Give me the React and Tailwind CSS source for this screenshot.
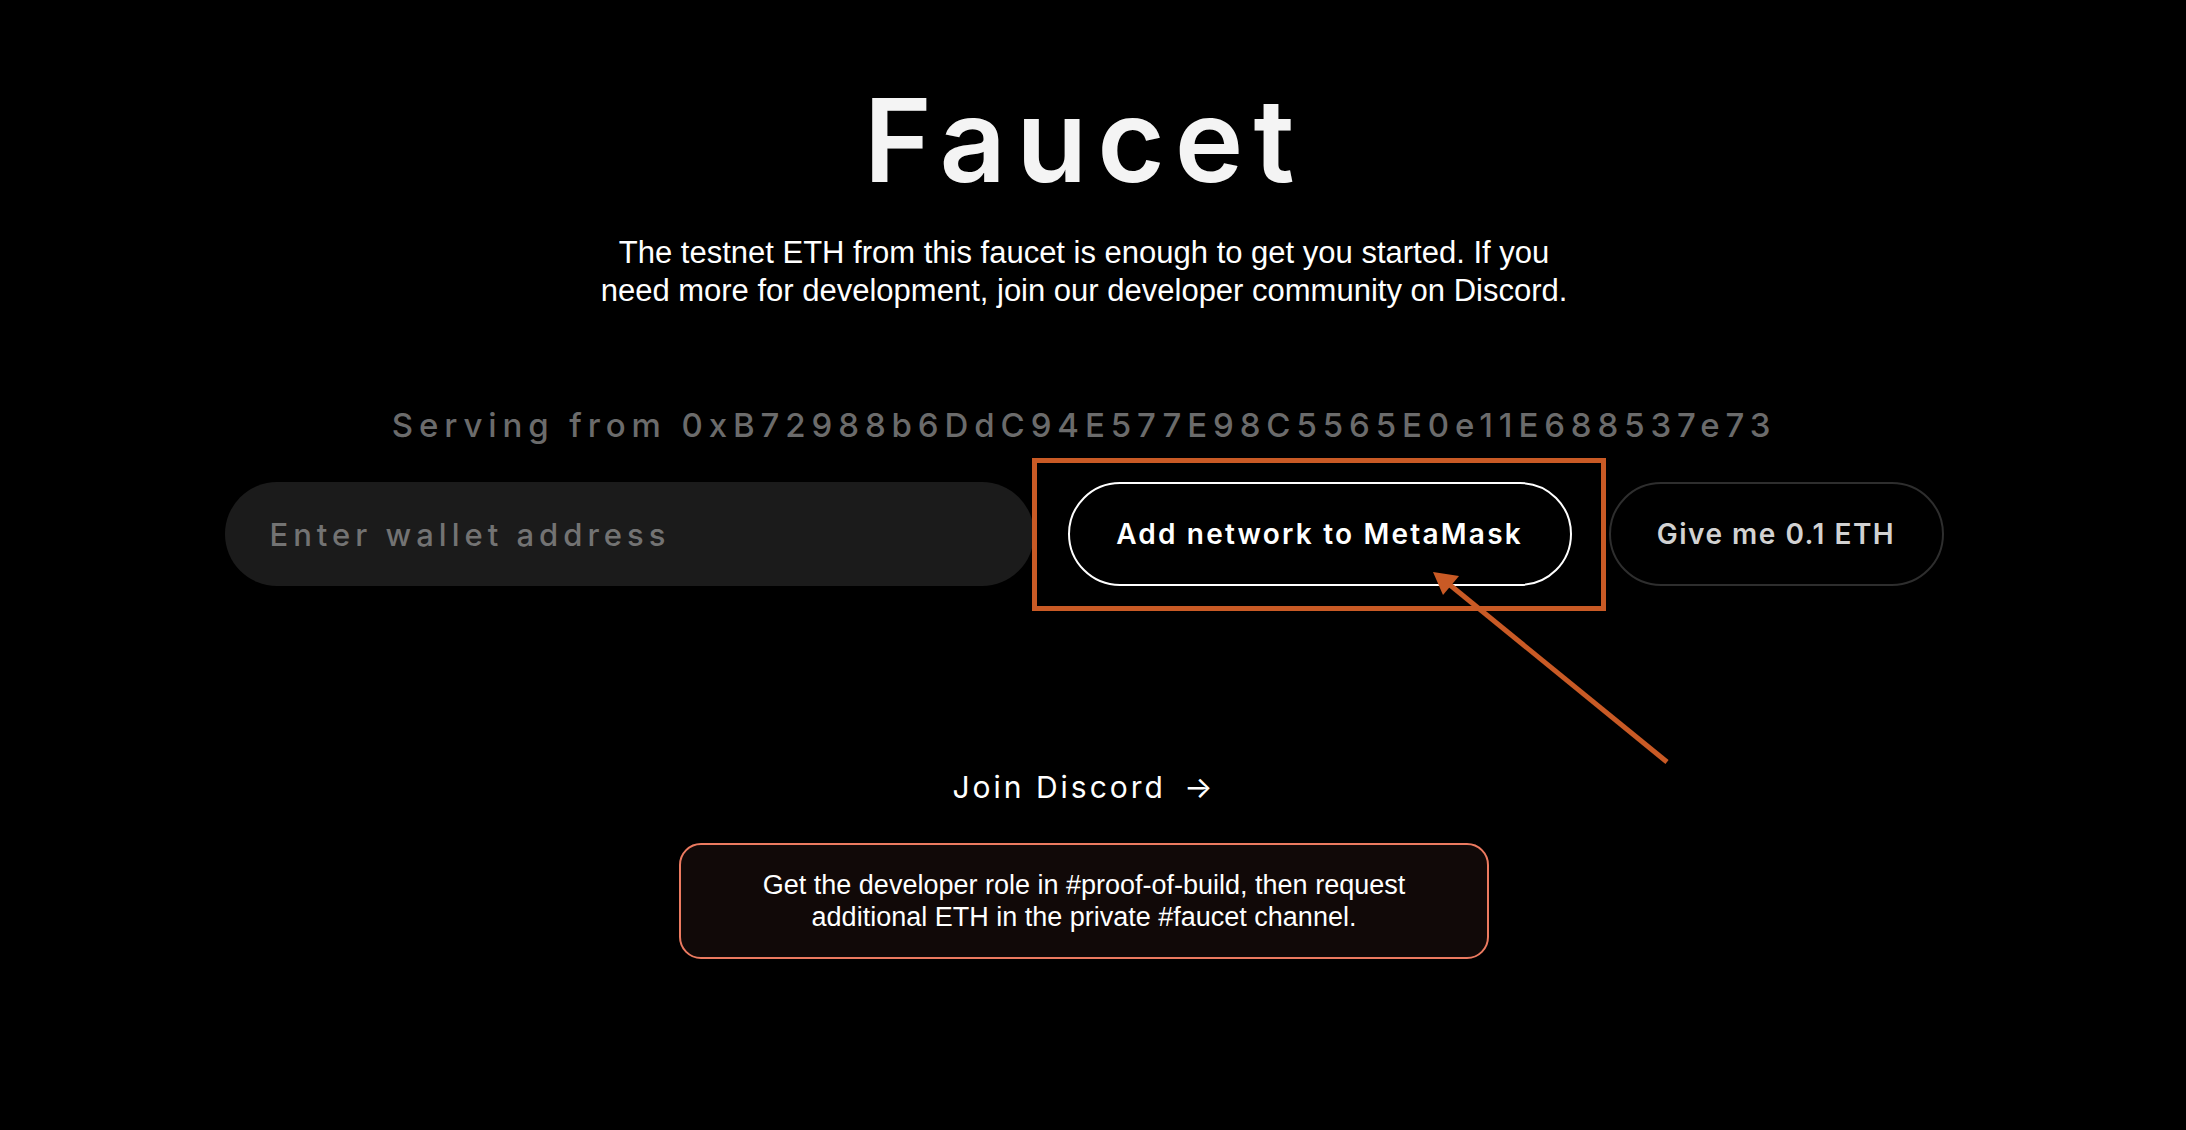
import { useState } from "react";

const wide = { fontFamily: "Inter, 'Noto Sans', sans-serif" };

export default function App() {
    const [address, setAddress] = useState("");

    return (
        <div className="relative min-h-screen w-full bg-black pr-[18px]">
            <div className="flex flex-col items-center">
                {/* Heading */}
                <h1
                    style={wide}
                    className="mt-[82px] text-[116px] leading-none font-semibold tracking-[10px] text-[#f4f4f4]"
                >
                    Faucet
                </h1>
                <p className="mt-[36px] text-center text-[31px] leading-[38px] text-white font-['Liberation_Sans',Arial,sans-serif]">
                    The testnet ETH from this faucet is enough to get you started. If you
                    <br />
                    need more for development, join our developer community on Discord.
                </p>

                <div
                    style={wide}
                    className="mt-[99px] text-[33px] leading-none font-medium tracking-[5.9px] text-[#6b6b6b]"
                >
                    Serving from 0xB72988b6DdC94E577E98C5565E0e11E688537e73
                </div>

                {/* Form row */}
                <div className="mt-[40px] flex items-center">
                    <input
                        value={address}
                        onChange={(e) => setAddress(e.target.value)}
                        placeholder="Enter wallet address"
                        style={wide}
                        className="h-[104px] w-[809px] rounded-full bg-[#1b1b1b] px-[45px] text-[31px] font-medium tracking-[5px] text-white outline-none placeholder:text-[#737373]"
                    />
                    <button
                        style={wide}
                        className="ml-[34px] h-[104px] w-[504px] rounded-full border-2 border-white bg-black text-[28px] font-semibold tracking-[2.2px] text-white"
                    >
                        Add network to MetaMask
                    </button>
                    <button
                        style={wide}
                        className="ml-[37px] h-[104px] w-[335px] rounded-full border-2 border-[#2e2e2e] bg-black text-[28px] font-semibold tracking-[1.5px] text-[#d2d2d2]"
                    >
                        Give me 0.1 ETH
                    </button>
                </div>

                <a
                    href="#"
                    style={wide}
                    className="mt-[186px] flex items-center gap-[18px] text-[30px] leading-none tracking-[3px] text-white"
                >
                    Join Discord
                    <span className="text-[30px]">→</span>
                </a>

                <div className="mt-[41px] flex h-[116px] w-[810px] items-center justify-center rounded-[22px] border-2 border-[#ec7a60] bg-[#110908]">
                    <p className="text-center text-[27px] leading-[32px] text-white font-['Liberation_Sans',Arial,sans-serif]">
                        Get the developer role in #proof-of-build, then request
                        <br />
                        additional ETH in the private #faucet channel.
                    </p>
                </div>
            </div>

            {/* Annotation overlay */}
            <div className="pointer-events-none absolute left-[1032px] top-[458px] h-[153px] w-[574px] border-[5px] border-[#c95a25]" />
            <svg
                className="pointer-events-none absolute left-[1420px] top-[560px]"
                width="260"
                height="215"
                viewBox="0 0 260 215"
            >
                <line x1="30" y1="25" x2="247" y2="202" stroke="#c95a25" strokeWidth="5" />
                <polygon points="13,12 39,16 23,35" fill="#c95a25" />
            </svg>
        </div>
    );
}
